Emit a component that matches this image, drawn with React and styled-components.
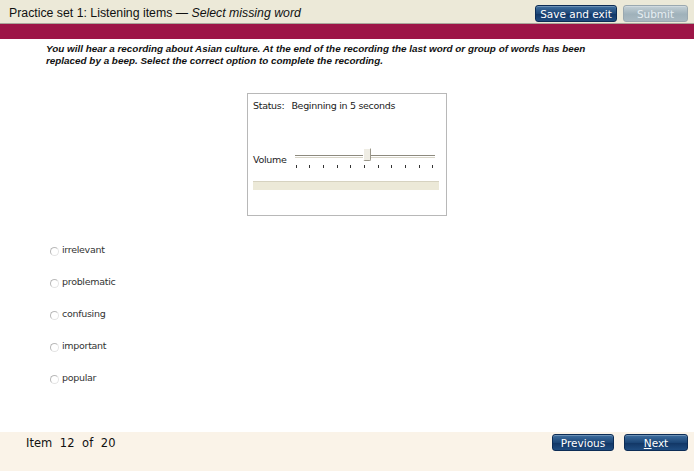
import styled, { createGlobalStyle } from "styled-components";

const GlobalStyle = createGlobalStyle`
  html, body { margin: 0; padding: 0; background: #fff; }
  body { font-family: "Liberation Sans", Arial, sans-serif; }
  #root { height: 100vh; }
`;

const Page = styled.div`
  height: 471px;
  display: flex;
  flex-direction: column;
  overflow: hidden;
`;

const TopBar = styled.div`
  height: 23px;
  background: #ece9d8;
  border-bottom: 1px solid #a9a69a;
  display: flex;
  align-items: center;
  justify-content: space-between;
  padding: 0 6px 0 9px;
`;

const Title = styled.div`
  font-size: 12.3px;
  color: #111;
  margin-top: 2px;
  em { font-style: italic; }
`;

const BtnRow = styled.div`
  display: flex;
  gap: ${(p) => p.$gap || 6}px;
  align-items: center;
  margin-top: ${(p) => p.$top || 0}px;
`;

const Btn = styled.button`
  font-family: "DejaVu Sans", Verdana, sans-serif;
  font-size: 10.5px;
  height: 17px;
  width: ${(p) => p.$w}px;
  padding: 0;
  border-radius: 3px;
  border: 1px solid ${(p) => (p.$disabled ? "#9aa8b0" : "#0c2c55")};
  color: ${(p) => (p.$disabled ? "#e6eef2" : "#fff")};
  background: ${(p) =>
    p.$disabled
      ? "linear-gradient(#c4d0d6, #9fb1ba 55%, #a9b9c1)"
      : "linear-gradient(#3f6f9f, #1c4677 50%, #123766 55%, #1f4c80)"};
  box-shadow: inset 0 1px 0 rgba(255,255,255,0.25);
  cursor: default;
  u { text-decoration: underline; }
`;

const Band = styled.div`
  height: 15px;
  background: #9d1547;
`;

const Instructions = styled.p`
  margin: 4px 0 0 46px;
  width: 580px;
  font-size: 9.9px;
  line-height: 12px;
  font-weight: bold;
  font-style: italic;
  color: #111;
`;

const PlayerWrap = styled.div`
  display: flex;
  justify-content: center;
  margin-top: 26px;
`;

const Player = styled.div`
  width: 188px;
  height: 121px;
  border: 1px solid #b8b8b8;
  padding: 0 5px;
  display: flex;
  flex-direction: column;
  font-family: "DejaVu Sans", Tahoma, sans-serif;
  font-size: 9.5px;
  color: #222;
  letter-spacing: -0.3px;
`;

const Status = styled.div`
  margin-top: 6px;
  span { margin-right: 7px; }
`;

const VolumeRow = styled.div`
  margin-top: 43px;
  display: flex;
  align-items: flex-start;
  gap: 8px;
`;

const Slider = styled.div`
  position: relative;
  width: 140px;
  height: 20px;
  margin-top: -2px;
`;

const Track = styled.div`
  margin-top: 3px;
  height: 1px;
  border-top: 1px solid #8d8a7e;
  border-bottom: 1px solid #d8d5c8;
`;

const Ticks = styled.div`
  display: flex;
  justify-content: space-between;
  margin-top: 7px;
  padding: 0 1px;
`;

const Tick = styled.div`
  width: 1px;
  height: 3px;
  background: #333;
`;

const Thumb = styled.div`
  position: absolute;
  left: 68px;
  top: -4px;
  width: 6px;
  height: 11px;
  background: #efede4;
  border: 1px solid #9a978a;
  border-left-color: #fff;
  border-top-color: #fff;
  border-radius: 1px 1px 2px 2px;
`;

const Progress = styled.div`
  margin: 9px 2px 0 0;
  height: 8px;
  background: #ece9d8;
  border-top: 1px solid #d6d2c0;
`;

const Options = styled.div`
  margin: 26px 0 0 50px;
  display: flex;
  flex-direction: column;
  gap: 18px;
`;

const Option = styled.label`
  display: flex;
  align-items: center;
  gap: 3px;
  font-family: "DejaVu Sans", Tahoma, sans-serif;
  font-size: 9.5px;
  color: #333;
  height: 14px;
  letter-spacing: -0.3px;
`;

const Radio = styled.span`
  width: 7px;
  height: 7px;
  margin-top: 4px;
  border-radius: 50%;
  border: 1px solid #b9b9b9;
  border-bottom-color: #e4e4e4;
  border-right-color: #e4e4e4;
  background: #fff;
`;

const Footer = styled.div`
  margin-top: auto;
  height: 37px;
  background: #faf3e8;
  display: flex;
  align-items: flex-start;
  justify-content: space-between;
  padding: 2px 6px 0 26px;
`;

const Counter = styled.div`
  font-family: "DejaVu Sans", Verdana, sans-serif;
  font-size: 11.5px;
  color: #111;
  margin-top: 2px;
  word-spacing: 4px;
`;

const options = ["irrelevant", "problematic", "confusing", "important", "popular"];

export default function App() {
  return (
    <>
      <GlobalStyle />
      <Page>
        <TopBar>
          <Title>
            Practice set 1: Listening items — <em>Select missing word</em>
          </Title>
          <BtnRow $top={4}>
            <Btn $w={82}>Save and exit</Btn>
            <Btn $w={65} $disabled>Submit</Btn>
          </BtnRow>
        </TopBar>
        <Band />
        <Instructions>
          You will hear a recording about Asian culture. At the end of the recording the last word or group of words has been
          replaced by a beep. Select the correct option to complete the recording.
        </Instructions>
        <PlayerWrap>
          <Player>
            <Status>
              <span>Status:</span>Beginning in 5 seconds
            </Status>
            <VolumeRow>
              <div>Volume</div>
              <Slider>
                <Track />
                <Ticks>
                  {Array.from({ length: 11 }).map((_, i) => (
                    <Tick key={i} />
                  ))}
                </Ticks>
                <Thumb />
              </Slider>
            </VolumeRow>
            <Progress />
          </Player>
        </PlayerWrap>
        <Options>
          {options.map((o) => (
            <Option key={o}>
              <Radio />
              {o}
            </Option>
          ))}
        </Options>
        <Footer>
          <Counter>Item 12 of 20</Counter>
          <BtnRow $gap={10}>
            <Btn $w={62}>Previous</Btn>
            <Btn $w={64}>
              <u>N</u>ext
            </Btn>
          </BtnRow>
        </Footer>
      </Page>
    </>
  );
}
